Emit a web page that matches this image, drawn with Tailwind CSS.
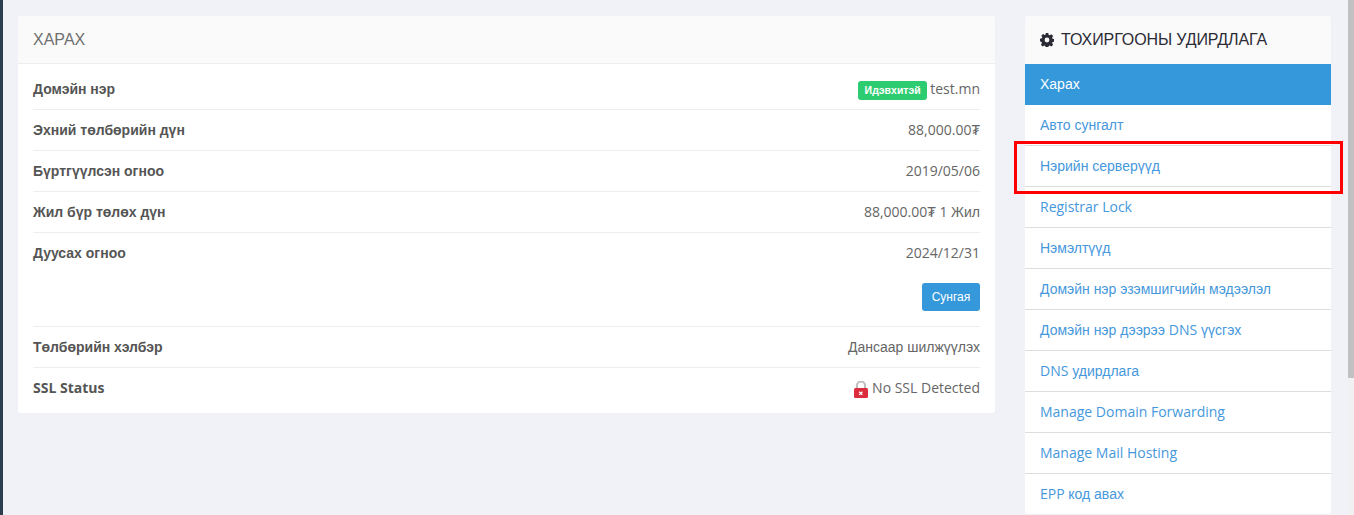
<!DOCTYPE html>
<html lang="en">
<head>
    <meta charset="UTF-8">
    <title>Domain</title>
    <script src="https://cdn.jsdelivr.net/npm/@tailwindcss/browser@4"></script>
</head>
<body class="h-[515px] overflow-hidden bg-[#f0f2f7] font-['Open_Sans',sans-serif] text-[14px] text-[#666]">
<div class="flex h-[515px]">
    <div class="w-[3px] shrink-0 bg-[#2c3e50]"></div>

    <div class="flex min-w-0 flex-1 items-start pl-[15px] pt-[16px]">
        <!-- main panel -->
        <div class="w-[977px] shrink-0 rounded-[3px] bg-white">
            <div class="h-[48px] rounded-t-[3px] border-b border-[#eeeeee] bg-[#fafafa] px-[15px] font-['Liberation_Sans',sans-serif] text-[16px] leading-[47px] text-[#6f6f6f]">ХАРАХ</div>
            <div class="px-[15px]">
                <div class="flex h-[46px] items-center justify-between border-b border-[#eeeeee] pt-[4px]">
                    <span class="mt-[2px] font-['Liberation_Sans',sans-serif] font-bold text-[#555]">Домэйн нэр</span>
                    <span class="flex items-center gap-[3px]">
                        <span class="mt-[4px] rounded-[3px] bg-[#2ecc71] px-[6.5px] font-['Liberation_Sans',sans-serif] text-[10.5px] leading-[19px] font-bold text-white">Идэвхитэй</span>
                        test.mn
                    </span>
                </div>
                <div class="flex h-[41px] items-center justify-between border-b border-[#eeeeee]">
                    <span class="font-['Liberation_Sans',sans-serif] font-bold text-[#555]">Эхний төлбөрийн дүн</span>
                    <span class="mt-[-1px]">88,000.00₮</span>
                </div>
                <div class="flex h-[41px] items-center justify-between border-b border-[#eeeeee]">
                    <span class="font-['Liberation_Sans',sans-serif] font-bold text-[#555]">Бүртгүүлсэн огноо</span>
                    <span class="mt-[-1px]">2019/05/06</span>
                </div>
                <div class="flex h-[41px] items-center justify-between border-b border-[#eeeeee]">
                    <span class="font-['Liberation_Sans',sans-serif] font-bold text-[#555]">Жил бүр төлөх дүн</span>
                    <span class="mt-[-1px]">88,000.00₮ 1 <span class="font-['Liberation_Sans',sans-serif]">Жил</span></span>
                </div>
                <div class="flex h-[94px] flex-col border-b border-[#eeeeee]">
                    <div class="flex h-[41px] shrink-0 items-center justify-between">
                        <span class="font-['Liberation_Sans',sans-serif] font-bold text-[#555]">Дуусах огноо</span>
                        <span class="mt-[-2px]">2024/12/31</span>
                    </div>
                    <div class="mt-[9px] flex justify-end">
                        <button class="h-[28px] w-[58px] rounded-[3px] bg-[#3498db] font-['Liberation_Sans',sans-serif] text-[12px] text-white">Сунгая</button>
                    </div>
                </div>
                <div class="flex h-[41px] items-center justify-between border-b border-[#eeeeee]">
                    <span class="font-['Liberation_Sans',sans-serif] font-bold text-[#555]">Төлбөрийн хэлбэр</span>
                    <span class="font-['Liberation_Sans',sans-serif]">Дансаар шилжүүлэх</span>
                </div>
                <div class="flex h-[45px] items-start justify-between pt-[9px]">
                    <span class="font-bold text-[#555]">SSL Status</span>
                    <span class="flex items-center gap-[4px]">
                        <svg class="mt-[3px]" width="14" height="17" viewBox="0 0 14 17">
                            <path d="M3 8V4.5a4 4 0 0 1 8 0V8" fill="none" stroke="#bdbdbd" stroke-width="2"/>
                            <rect x="0" y="7" width="14" height="10" rx="1.5" fill="#dc2b3c"/>
                            <path d="M5.2 10.7l3.2 3.2M8.4 10.7l-3.2 3.2" stroke="#fff" stroke-width="1.3"/>
                        </svg>
                        No SSL Detected
                    </span>
                </div>
            </div>
        </div>

        <!-- sidebar -->
        <div class="relative ml-[30px] w-[306px] shrink-0">
            <div class="flex h-[48px] items-center gap-[7px] rounded-t-[3px] bg-[#fafafa] px-[15px] text-[#2b2b36]">
                <svg width="14" height="14" viewBox="0 0 14 14">
                    <path fill="#2b2b36" fill-rule="evenodd" d="M5.7 0h2.6l.4 1.9 1 .4 1.6-1 1.8 1.8-1 1.6.4 1 1.9.4v2.6l-1.9.4-.4 1 1 1.6-1.8 1.8-1.6-1-1 .4-.4 1.9H5.7l-.4-1.9-1-.4-1.6 1-1.8-1.8 1-1.6-.4-1L0 8.3V5.7l1.9-.4.4-1-1-1.6 1.8-1.8 1.6 1 1-.4zM7 4.6a2.4 2.4 0 1 0 0 4.8 2.4 2.4 0 0 0 0-4.8z"/>
                </svg>
                <span class="font-['Liberation_Sans',sans-serif] text-[16px] tracking-[-0.1px]">ТОХИРГООНЫ УДИРДЛАГА</span>
            </div>
            <div class="flex flex-col rounded-b-[3px] bg-white text-[14px] text-[#4698dc]">
                <a class="h-[41px] bg-[#3498db] px-[15px] font-['Liberation_Sans',sans-serif] text-[14px] leading-[41px] font-medium text-white">Харах</a>
                <a class="h-[41px] border-b border-[#dddddd] px-[15px] font-['Liberation_Sans',sans-serif] leading-[40px]">Авто сунгалт</a>
                <a class="h-[41px] border-b border-[#dddddd] px-[15px] font-['Liberation_Sans',sans-serif] leading-[40px]">Нэрийн серверүүд</a>
                <a class="h-[41px] border-b border-[#dddddd] px-[15px] leading-[40px]">Registrar Lock</a>
                <a class="h-[41px] border-b border-[#dddddd] px-[15px] font-['Liberation_Sans',sans-serif] leading-[40px]">Нэмэлтүүд</a>
                <a class="h-[41px] border-b border-[#dddddd] px-[15px] font-['Liberation_Sans',sans-serif] leading-[40px]">Домэйн нэр эзэмшигчийн мэдээлэл</a>
                <a class="h-[41px] border-b border-[#dddddd] px-[15px] font-['Liberation_Sans',sans-serif] leading-[40px]">Домэйн нэр дээрээ <span class="font-['Open_Sans',sans-serif]">DNS</span> үүсгэх</a>
                <a class="h-[41px] border-b border-[#dddddd] px-[15px] font-['Liberation_Sans',sans-serif] leading-[40px]"><span class="font-['Open_Sans',sans-serif]">DNS</span> удирдлага</a>
                <a class="h-[41px] border-b border-[#dddddd] px-[15px] leading-[40px]">Manage Domain Forwarding</a>
                <a class="h-[41px] border-b border-[#dddddd] px-[15px] leading-[40px]">Manage Mail Hosting</a>
                <a class="h-[40px] px-[15px] leading-[40px]"><span>EPP</span> <span class="font-['Liberation_Sans',sans-serif]">код авах</span></a>
            </div>
            <!-- annotation box -->
            <div class="absolute top-[125px] left-[-11px] h-[53px] w-[329px] border-[3px] border-[#ff0000]"></div>
        </div>
    </div>

    <!-- scrollbar -->
    <div class="w-[6px] shrink-0 bg-[#f1f1f1]">
        <div class="h-[378px] bg-[#c1c1c1]"></div>
    </div>
</div>
</body>
</html>
